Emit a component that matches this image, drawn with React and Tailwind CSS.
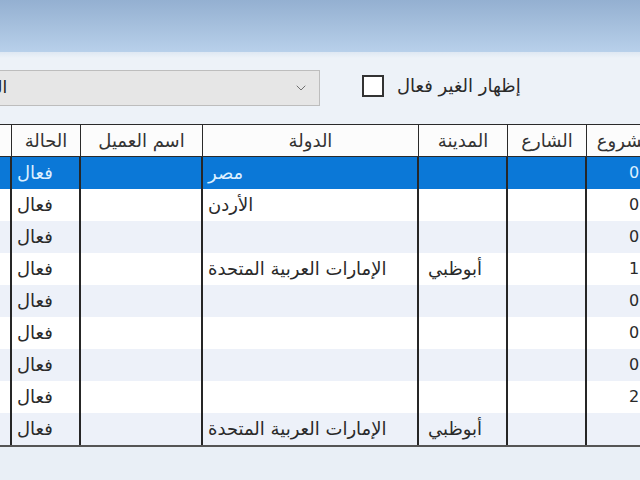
import { ChevronDown } from 'lucide-react';

const COLS = [
  { key: 'extra', title: 'الرقم', w: 'w-[72px]' },
  { key: 'status', title: 'الحالة', w: 'w-[69px]' },
  { key: 'name', title: 'اسم العميل', w: 'w-[122px]' },
  { key: 'country', title: 'الدولة', w: 'w-[216px]' },
  { key: 'city', title: 'المدينة', w: 'w-[89px]' },
  { key: 'street', title: 'الشارع', w: 'w-[79px]' },
  { key: 'branch', title: 'المشروع', w: 'w-[86px]' },
];

const UAE = 'الإمارات العربية المتحدة';
const ABU = 'أبوظبي';

const ROWS = [
  { status: 'فعال', country: 'مصر', branch: '0' },
  { status: 'فعال', country: 'الأردن', branch: '0' },
  { status: 'فعال', branch: '0' },
  { status: 'فعال', country: UAE, city: ABU, branch: '1' },
  { status: 'فعال', branch: '0' },
  { status: 'فعال', branch: '0' },
  { status: 'فعال', branch: '0' },
  { status: 'فعال', branch: '2' },
  { status: 'فعال', country: UAE, city: ABU },
];

const font = { fontFamily: '"DejaVu Sans", "Noto Sans", sans-serif' };

function HeaderRow() {
  return (
    <div className="flex h-[33px] bg-[#fcfcfc] border-t border-b border-[#2a2a2a]">
      {COLS.map((c, i) => (
        <div
          key={c.key}
          className={`${c.w} shrink-0 flex items-center justify-center text-[18px] leading-none text-[#333] whitespace-nowrap overflow-hidden ${
            i < COLS.length - 1 ? 'border-r border-[#2a2a2a]' : ''
          }`}
        >
          {c.title}
        </div>
      ))}
    </div>
  );
}

function DataRow({ row, index }) {
  const selected = index === 0;
  const bg = selected ? 'bg-[#0b78d7]' : index % 2 === 1 ? 'bg-white' : 'bg-[#edf1f9]';
  const text = selected ? 'text-[#dcefff]' : 'text-[#2a2a2a]';
  return (
    <div className={`flex h-[32px] ${bg} ${text}`}>
      {COLS.map((c, i) => (
        <div
          key={c.key}
          className={`${c.w} shrink-0 flex items-center leading-none whitespace-nowrap overflow-hidden ${
            c.key === 'branch' ? 'pl-[42px] text-[16px]' : c.key === 'city' ? 'pl-[9px] text-[18px]' : 'pl-[5px] text-[18px]'
          } ${i < COLS.length - 1 ? 'border-r-2 border-[#262626]' : ''}`}
        >
          {c.key === 'extra' ? '' : row[c.key] || ''}
        </div>
      ))}
    </div>
  );
}

export default function App() {
  return (
    <div className="w-[640px] h-[480px] overflow-hidden bg-[#e9eff6]" style={font}>
      <div className="h-[52px] bg-gradient-to-b from-[#94b0d1] to-[#b8d0ea]" />
      <div className="h-[6px] bg-gradient-to-b from-[#dfe8f3] to-[#edf2f8]" />
      <div className="h-[66px] bg-[#edf2f8] flex items-start pt-[12px]">
        <div className="ml-[-80px] w-[400px] h-[36px] shrink-0 bg-[#e6e6e6] border border-[#bdbdbd] flex items-center justify-between pl-[54px] pr-[10px]">
          <span className="text-[17px] text-[#222]">الكل</span>
          <ChevronDown className="w-[16px] h-[16px] text-[#707070]" strokeWidth={1.5} />
        </div>
        <div className="ml-[42px] mt-[5px] flex items-center gap-[13px]">
          <div className="w-[22px] h-[22px] bg-white border-2 border-[#333]" />
          <span className="text-[18px] leading-none text-[#2a2a2a] whitespace-nowrap">إظهار الغير فعال</span>
        </div>
      </div>
      <div className="ml-[-60px] w-[733px]">
        <HeaderRow />
        {ROWS.map((r, i) => (
          <DataRow key={i} row={r} index={i} />
        ))}
        <div className="h-[2px] bg-[#555]" />
      </div>
    </div>
  );
}
